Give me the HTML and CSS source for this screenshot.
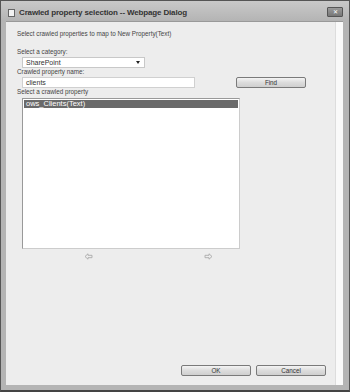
FILE: index.html
```html
<!DOCTYPE html>
<html>
<head>
<meta charset="utf-8">
<link rel="stylesheet" href="styles.css">
</head>
<body>
<div class="window">
  <div class="titlebar">
    <span class="appicon"></span>
    <span class="title">Crawled property selection -- Webpage Dialog</span>
    <span class="close">&#10005;</span>
  </div>
  <div class="frame">
    <div class="content">
      <div class="intro">Select crawled properties to map to New Property(Text)</div>
      <div class="label l1">Select a category:</div>
      <div class="select"><span>SharePoint</span><span class="caret"></span></div>
      <div class="label">Crawled property name:</div>
      <div class="row">
        <div class="input">clients</div>
        <div class="btn find">Find</div>
      </div>
      <div class="label">Select a crawled property</div>
      <div class="list">
        <div class="item sel">ows_Clients(Text)</div>
      </div>
      <div class="arrows">
        <svg width="9" height="7" viewBox="0 0 9 7"><path d="M1 3.5 L4 0.8 V2.3 H8 V4.7 H4 V6.2 Z" fill="none" stroke="#aaa" stroke-width="0.9"/></svg>
        <svg width="9" height="7" viewBox="0 0 9 7"><path d="M8 3.5 L5 0.8 V2.3 H1 V4.7 H5 V6.2 Z" fill="none" stroke="#aaa" stroke-width="0.9"/></svg>
      </div>
      <div class="spacer"></div>
      <div class="footer">
        <div class="btn">OK</div>
        <div class="btn">Cancel</div>
      </div>
    </div>
    <div class="rstrip"></div>
  </div>
</div>
</body>
</html>
```
FILE: styles.css
```css
html, body { margin: 0; padding: 0; }
body { width: 350px; height: 392px; overflow: hidden; font-family: "Liberation Sans", Arial, sans-serif; }
.window {
  width: 350px; height: 392px; box-sizing: border-box;
  background: #b4b4b4;
  border: 1px solid #555;
  border-bottom: 2px solid #444;
  display: flex; flex-direction: column;
}
.titlebar {
  height: 17px; flex: none;
  display: flex; align-items: center;
  padding: 2px 6px 0 7px;
  background: linear-gradient(#c9c9c9, #b5b5b5);
}
.appicon {
  width: 7px; height: 8px; background: #f2f2f2; border: 1px solid #666;
  box-sizing: border-box; margin-right: 4px; position: relative; top: 1px;
}
.title { font-size: 8px; font-weight: bold; color: #333; flex: 1; letter-spacing: -0.15px; position: relative; top: 1px; }
.close {
  width: 14px; height: 8px; font-size: 6px; line-height: 8px; text-align: center;
  color: #fff; background: linear-gradient(#9a9a9a, #777);
  border: 1px solid #555; border-radius: 1px; margin-top: 1px;
}
.frame {
  flex: 1; display: flex;
  margin: 1px 6px 5px 5px;
  border-top: 1px solid #999;
}
.content {
  flex: 1; background: #ededed; display: flex; flex-direction: column;
  padding: 8px 0 9px 11px; box-sizing: border-box;
  font-size: 6.3px; color: #444;
}
.rstrip { width: 7px; background: #fafafa; border-left: 1px solid #ddd; }
.intro { height: 8px; line-height: 8px; }
.label { height: 8px; line-height: 8px; margin-top: 0; }
.label.l1 { margin-top: 10px; }
.select {
  margin: 1px 0 0 5px; width: 123px; height: 11px; box-sizing: border-box;
  background: #fff; border: 1px solid #c8c8c8;
  display: flex; align-items: center; justify-content: space-between; padding: 0 4px 0 3px;
  font-size: 7px; line-height: 9px; color: #333;
}
.caret { width: 0; height: 0; border-left: 2.5px solid transparent; border-right: 2.5px solid transparent; border-top: 3px solid #222; }
.row { display: flex; align-items: center; margin-top: 1px; }
.input {
  margin-left: 5px; width: 173px; height: 11px; box-sizing: border-box;
  background: #fff; border: 1px solid #d0d0d0; padding: 0 3px; line-height: 9px; font-size: 7px; color: #333;
}
.btn {
  width: 70px; height: 11px; box-sizing: border-box;
  border: 1px solid #7a7a7a; border-radius: 2px;
  background: linear-gradient(#f4f4f4, #dcdcdc 50%, #cfcfcf);
  text-align: center; font-size: 6.3px; line-height: 9px; color: #333;
}
.find { margin-left: 41px; }
.list {
  margin: 2px 0 0 5px; width: 218px; height: 151px; box-sizing: border-box;
  background: #fff; border: 1px solid #999; border-bottom-color: #ccc; border-right-color: #ccc; padding: 1px;
}
.item { height: 8px; line-height: 8px; font-size: 7.5px; padding-left: 2px; }
.item.sel { background: #6a6a6a; color: #fff; }
.arrows { display: flex; gap: 111px; margin: 4px 0 0 67px; height: 7px; }
.spacer { flex: 1; }
.footer { display: flex; gap: 5px; justify-content: flex-end; padding-right: 9px; }
```
